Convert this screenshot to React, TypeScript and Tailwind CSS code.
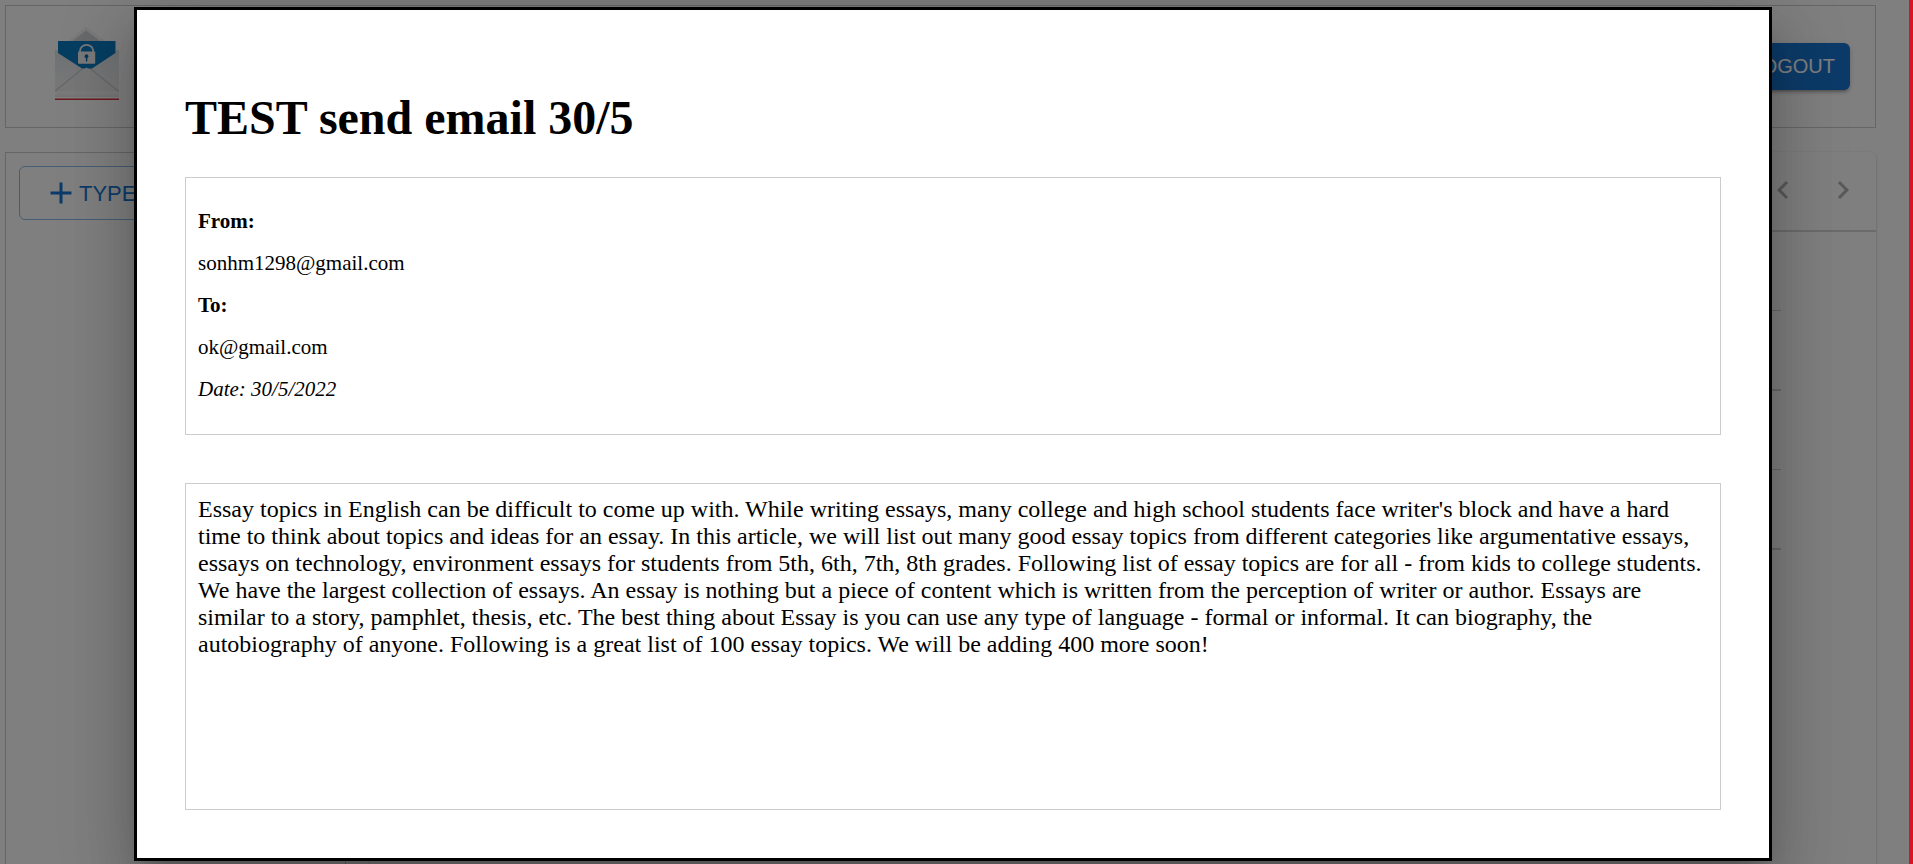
import React from "react";

const ESSAY =
  "Essay topics in English can be difficult to come up with. While writing essays, many college and high school students face writer's block and have a hard time to think about topics and ideas for an essay. In this article, we will list out many good essay topics from different categories like argumentative essays, essays on technology, environment essays for students from 5th, 6th, 7th, 8th grades. Following list of essay topics are for all - from kids to college students. We have the largest collection of essays. An essay is nothing but a piece of content which is written from the perception of writer or author. Essays are similar to a story, pamphlet, thesis, etc. The best thing about Essay is you can use any type of language - formal or informal. It can biography, the autobiography of anyone. Following is a great list of 100 essay topics. We will be adding 400 more soon!";

function Logo() {
  return (
    <svg width="64" height="76" viewBox="55 25 64 76" aria-hidden="true">
      <defs>
        <linearGradient id="paper" x1="0" y1="0" x2="0" y2="1">
          <stop offset="0" stopColor="#dfe2e5" />
          <stop offset="1" stopColor="#f2f3f4" />
        </linearGradient>
        <linearGradient id="foot" x1="0" y1="0" x2="0" y2="1">
          <stop offset="0" stopColor="#f8f8f8" />
          <stop offset="1" stopColor="#e8e8e8" />
        </linearGradient>
      </defs>
      <path d="M86 26.5 68 41h37z" fill="#f3f3f3" />
      <path d="M86 30.5 72.5 41h27.5z" fill="#d0d2d6" />
      <path d="M55 49 58 51l24 17h9l24-16 4-3v43H55z" fill="url(#paper)" />
      <path d="M83 68 55 91.5h64L90 68z" fill="#ecedef" />
      <path d="M83.500 68 55 91M89.500 68 119 91.500" stroke="#cbccce" strokeWidth="1.200" fill="none" />
      <path d="M58 41h57.500v12L92 68.500 88 68.500 86.500 67.500 85 68.500 82 68.500 58 53z" fill="#0c7cc4" />
      <path d="M80 53v-2a6.600 6.200 0 0 1 13.200 0v2" fill="none" stroke="#f2f2f2" strokeWidth="1.800" />
      <rect x="78" y="51.500" width="17.200" height="12.200" rx="0.800" fill="#f2f2f2" />
      <circle cx="86.500" cy="56.200" r="1.900" fill="#0c6fb0" />
      <path d="M85.900 56h1.400v5.500h-1.400z" fill="#0c6fb0" />
      <path d="M55 92h64v5H55z" fill="url(#foot)" />
      <path d="M55 98.600h64v1.400H55z" fill="#d9343f" />
    </svg>
  );
}

function Icon({ path }: { path: string }) {
  return (
    <svg width="36" height="36" viewBox="0 0 24 24" fill="currentColor" aria-hidden="true" className="shrink-0">
      <path d={path} />
    </svg>
  );
}

function Mailbox() {
  return (
    <div className="flex min-w-0 flex-1 flex-col gap-6 pt-[5px] pr-[33px] pl-[5px] font-['Liberation_Sans',Arial,sans-serif]">
      <header className="flex h-[123px] shrink-0 items-start justify-between border border-[#ccc] pr-[25px] pl-[49px]">
        <div className="pt-[19px]">
          <Logo />
        </div>
        <button
          type="button"
          className="mt-[37px] h-[47px] rounded-md bg-[#1976d2] px-[15px] pb-0.5 text-xl text-white shadow-[0_4px_2px_-3px_rgba(0,0,0,0.2),0_3px_3px_rgba(0,0,0,0.14),0_1px_7px_rgba(0,0,0,0.12)]"
        >
          LOGOUT
        </button>
      </header>

      <div className="flex flex-1 gap-6">
        <aside className="w-[341px] shrink-0 border border-b-0 border-[#ccc] p-[13px]">
          <button
            type="button"
            className="flex h-[54px] w-full items-center rounded-md border border-[#8cbae8] px-[23px] text-[22px] text-[#1976d2]"
          >
            <Icon path="M19 13h-6v6h-2v-6H5v-2h6V5h2v6h6z" />
            TYPE
          </button>
        </aside>

        <main className="flex-1 rounded-t-md bg-white shadow-[0_3px_2px_-1px_rgba(0,0,0,0.2),0_1px_2px_rgba(0,0,0,0.14),0_1px_4px_rgba(0,0,0,0.12)]">
          <div className="flex h-20 items-center justify-end gap-6 border-b-2 border-[#d6d6d6] pr-[15px] pb-0.5 text-black/30">
            <button type="button" aria-label="Previous page" disabled>
              <Icon path="M15.410 7.410 14 6l-6 6 6 6 1.410-1.410L10.830 12z" />
            </button>
            <button type="button" aria-label="Next page" disabled>
              <Icon path="M10 6 8.590 7.410 13.170 12l-4.580 4.590L10 18l6-6z" />
            </button>
          </div>
          <ul className="mr-[95px]">
            <li className="h-[79px] border-b border-[#d0d0d0]" />
            <li className="h-20 border-b-2 border-[#d0d0d0]" />
            <li className="h-[79px] border-b border-[#d0d0d0]" />
            <li className="h-20 border-b-2 border-[#d0d0d0]" />
          </ul>
        </main>
      </div>
    </div>
  );
}

function EmailDialog() {
  return (
    <div
      role="dialog"
      aria-modal="true"
      aria-labelledby="subject"
      className="flex flex-1 flex-col border-[3px] border-black bg-white p-12 font-['Liberation_Serif','Times_New_Roman',serif] text-black shadow-[0_16px_22px_-10px_rgba(0,0,0,0.2),0_36px_57px_4px_rgba(0,0,0,0.14),0_14px_69px_12px_rgba(0,0,0,0.12)]"
    >
      <h1 id="subject" className="my-8 text-[48px] leading-[55px] font-bold">
        TEST send email 30/5
      </h1>
      <section className="flex flex-col gap-[18px] border border-[#ccc] px-3 pt-[31px] pb-[33px] text-[21px] leading-6">
        <p className="font-bold">From:</p>
        <p>sonhm1298@gmail.com</p>
        <p className="font-bold">To:</p>
        <p>ok@gmail.com</p>
        <p className="italic">Date: 30/5/2022</p>
      </section>
      <section className="mt-12 flex-1 border border-[#ccc] p-3 text-2xl leading-[27px]">
        <p>{ESSAY}</p>
      </section>
    </div>
  );
}

export default function App() {
  return (
    <div className="relative flex min-h-screen overflow-hidden bg-white">
      <Mailbox />
      <div className="w-1 shrink-0 bg-[#d81324]" />
      <div className="absolute inset-y-0 right-1 left-0 flex overflow-hidden bg-black/50 pt-[7px] pr-[137px] pb-[3px] pl-[134px]">
        <EmailDialog />
      </div>
    </div>
  );
}
